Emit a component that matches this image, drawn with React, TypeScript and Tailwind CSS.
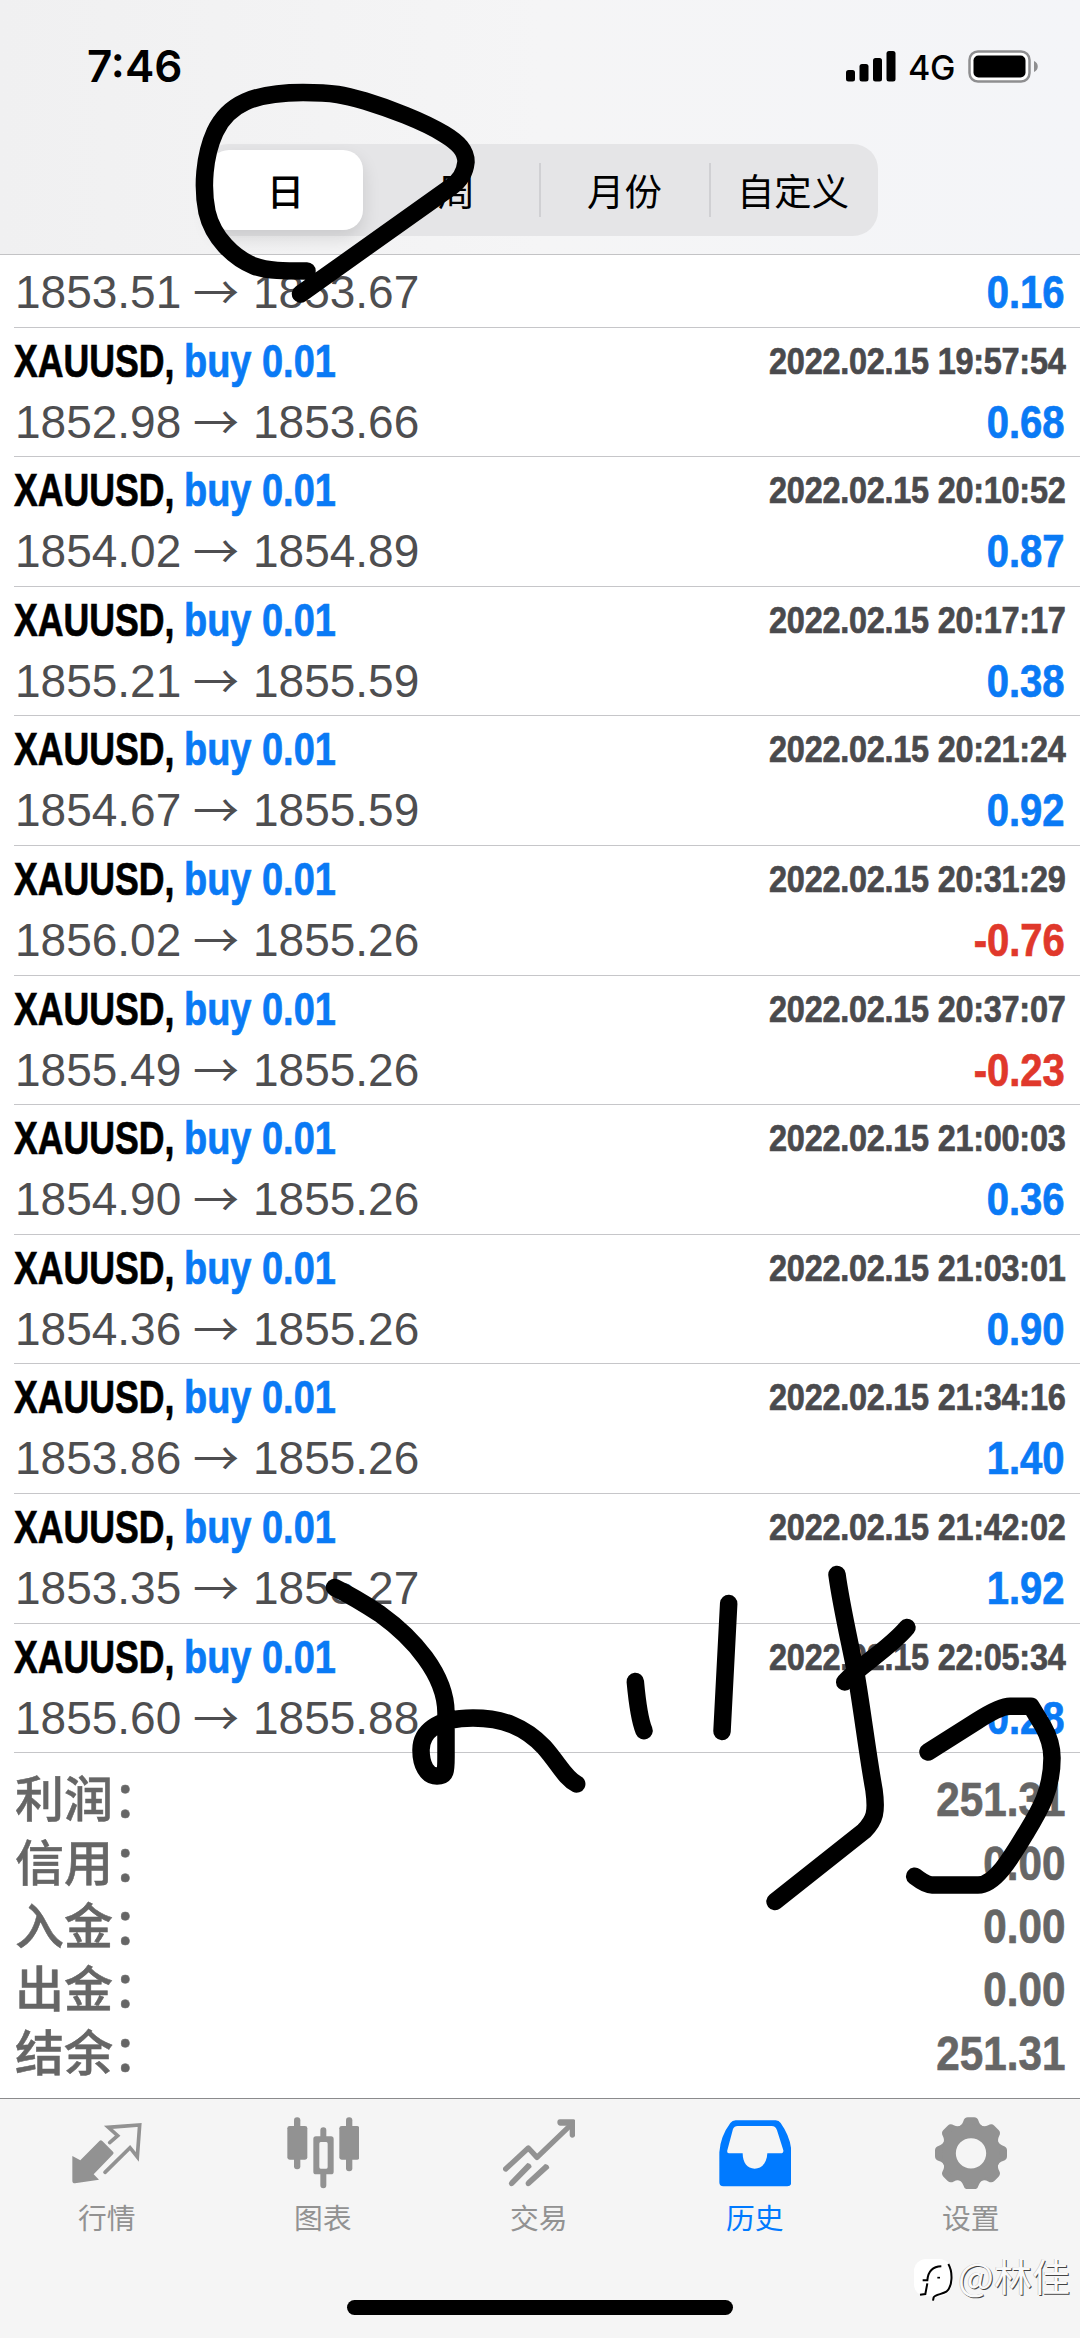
import clsx from "clsx";
import type { ReactNode } from "react";

type Deal = {
  time: string;
  open: string;
  close: string;
  profit: string;
};

const deals: Deal[] = [
  { time: "", open: "1853.51", close: "1853.67", profit: "0.16" },
  { time: "2022.02.15 19:57:54", open: "1852.98", close: "1853.66", profit: "0.68" },
  { time: "2022.02.15 20:10:52", open: "1854.02", close: "1854.89", profit: "0.87" },
  { time: "2022.02.15 20:17:17", open: "1855.21", close: "1855.59", profit: "0.38" },
  { time: "2022.02.15 20:21:24", open: "1854.67", close: "1855.59", profit: "0.92" },
  { time: "2022.02.15 20:31:29", open: "1856.02", close: "1855.26", profit: "-0.76" },
  { time: "2022.02.15 20:37:07", open: "1855.49", close: "1855.26", profit: "-0.23" },
  { time: "2022.02.15 21:00:03", open: "1854.90", close: "1855.26", profit: "0.36" },
  { time: "2022.02.15 21:03:01", open: "1854.36", close: "1855.26", profit: "0.90" },
  { time: "2022.02.15 21:34:16", open: "1853.86", close: "1855.26", profit: "1.40" },
  { time: "2022.02.15 21:42:02", open: "1853.35", close: "1855.27", profit: "1.92" },
  { time: "2022.02.15 22:05:34", open: "1855.60", close: "1855.88", profit: "0.28" }
];

const totals = [
  { label: "利润：", value: "251.31" },
  { label: "信用：", value: "0.00" },
  { label: "入金：", value: "0.00" },
  { label: "出金：", value: "0.00" },
  { label: "结余：", value: "251.31" }
];

const periods = ["日", "周", "月份", "自定义"];

function StatusBar() {
  return (
    <div className="flex h-[144px] items-start justify-between pr-[41px] pl-[87px]">
      <span className="mt-[40px] font-['Inter',sans-serif] text-[44px] leading-[52px] font-semibold text-black">
        7:46
      </span>
      <div className="mt-[50px] flex h-8 items-center">
        <svg width="50" height="32" viewBox="0 0 50 32">
          <rect x="0" y="20" width="9" height="11.5" rx="2.5" />
          <rect x="13.5" y="14" width="9" height="17.5" rx="2.5" />
          <rect x="27" y="8" width="9" height="23.5" rx="2.5" />
          <rect x="40.5" y="1" width="9" height="30.5" rx="2.5" />
        </svg>
        <span className="mt-[4px] ml-[12px] w-[60px] font-['Inter',sans-serif] text-[34px] leading-8 font-medium tracking-[-0.3px]">
          4G
        </span>
        <svg width="71" height="33" viewBox="0 0 71 33">
          <rect x="1.5" y="1.5" width="60" height="30" rx="8.5" fill="#fff" stroke="#8e8e90" strokeWidth="2.5" />
          <rect x="5.5" y="5.5" width="52" height="22" rx="5" />
          <path d="M66 11c5 2 5 9 0 11z" fill="#8e8e90" />
        </svg>
      </div>
    </div>
  );
}

function PeriodTabs() {
  return (
    <div className="mx-auto flex h-[92px] w-[675px] items-center rounded-[25px] bg-[#e5e5e7] p-[6px] font-['Noto_Sans_CJK_SC',sans-serif] text-[37.4px] text-black">
      {periods.map((period, index) => (
        <div
          key={period}
          className={clsx(
            "flex shrink-0 items-center justify-center leading-[54px]",
            index === 0 && "h-20 w-[154px] rounded-[20px] bg-white pb-px font-medium shadow-[0_8px_18px_rgba(0,0,0,0.12)]",
            index === 1 && "h-[54px] w-[176px] pl-3",
            index > 1 && "h-[54px] border-l-2 border-[#d0d0d3]",
            index === 2 && "w-[170px]",
            index === 3 && "w-[163px] pl-1"
          )}
        >
          {period}
        </div>
      ))}
    </div>
  );
}

function DealRow({ deal }: { deal: Deal }) {
  return (
    <div className="ml-[14px] h-[129.6px] border-b border-[#c6c6c9] pt-[3px] pr-[15px]">
      <div className="flex h-[61px] justify-between text-[46px] leading-[60px] font-bold [-webkit-text-stroke:0.7px]">
        <div className="flex whitespace-nowrap">
          <span className="w-[170px] origin-left scale-x-[0.775] text-black">XAUUSD,</span>
          <span className="origin-left scale-x-[0.825] text-[#0a7af5]">buy 0.01</span>
        </div>
        <span className="origin-right scale-x-[0.868] text-[37.4px] tracking-[-0.3px] whitespace-nowrap text-[#4a4a4d]">
          {deal.time}
        </span>
      </div>
      <div className="flex h-[60px] justify-between text-[46px] leading-[60px]">
        <div className="flex text-[#4e4e50]">
          <span className="ml-px w-[178px]">{deal.open}</span>
          <span className="-mt-[3px] w-[60px] font-['Noto_Sans_CJK_SC',sans-serif]">→</span>
          <span>{deal.close}</span>
        </div>
        <span
          className={clsx(
            "origin-right scale-x-[0.87] font-bold [-webkit-text-stroke:0.7px]",
            deal.profit.startsWith("-") ? "text-[#e0382b]" : "text-[#0a7af5]"
          )}
        >
          {deal.profit}
        </span>
      </div>
    </div>
  );
}

function Totals() {
  return (
    <div className="pt-[15px] pr-[15px] pl-[15px] text-[#666]">
      {totals.map((item) => (
        <div key={item.label} className="flex h-[63.4px] items-start justify-between">
          <span className="-mt-[4px] font-['Noto_Sans_CJK_SC',sans-serif] text-[49px] leading-[63px] font-medium [-webkit-text-stroke:0.5px]">
            {item.label}
          </span>
          <span className="origin-right scale-x-[0.87] text-[48.5px] leading-[63px] font-bold [-webkit-text-stroke:0.7px]">
            {item.value}
          </span>
        </div>
      ))}
    </div>
  );
}

// Tab icons share one 216 unit grid, three units to a pixel.
function TabIcon({ viewBox, children }: { viewBox: string; children: ReactNode }) {
  return (
    <svg width="72" height="72" viewBox={viewBox} fill="currentColor">
      {children}
    </svg>
  );
}

const gearTeeth = [0, 45, 90, 135, 180, 225, 270, 315];

const tabs = [
  {
    label: "行情",
    icon: (
      <TabIcon viewBox="212 80 216 216">
        <path d="M216 197l24 13 58-59q4-3 8 1l32 32q4 4 0 8l-58 60 16 16-72 11q-8 0-8-8z" />
        <path
          d="M328 157l24-21-28-25 94-7-7 96-22-28-75 74"
          fill="none"
          stroke="currentColor"
          strokeWidth="11"
          strokeLinecap="round"
        />
      </TabIcon>
    )
  },
  {
    label: "图表",
    icon: (
      <TabIcon viewBox="860 80 216 216">
        <rect x="861" y="107" width="60" height="101" rx="7" />
        <rect x="881" y="81" width="19" height="156" rx="9" />
        <rect x="1017" y="107" width="60" height="101" rx="7" />
        <rect x="1037" y="81" width="19" height="162" rx="9" />
        <path d="M960 120q0-9 9-9t9 9v18h14q8 0 8 8v98q0 8-8 8h-14v33q0 9-9 9t-9-9v-33h-13q-8 0-8-8v-98q0-8 8-8h13zM961 155q-4 0-4 5v70q0 5 4 5h17q4 0 4-5v-70q0-5-4-5z" fillRule="evenodd" />
      </TabIcon>
    )
  },
  {
    label: "交易",
    icon: (
      <TabIcon viewBox="308 80 216 216">
        <path
          d="M316 236l68-63 26 28 100-96"
          fill="none"
          stroke="currentColor"
          strokeWidth="16"
          strokeLinecap="round"
          strokeLinejoin="round"
        />
        <path d="M479 87h40q6 0 6 6v41q-2 8-9 8-8-1-8-9v-27h-29q-8-1-8-10t8-9z" />
        <path d="M381 218q12 2 13 12l-54 55q-8 6-13-1-4-6 2-12zM434 221q12 2 13 12l-57 52q-8 6-13-1-4-6 2-12z" />
      </TabIcon>
    )
  },
  {
    label: "历史",
    icon: (
      <TabIcon viewBox="956 80 216 216">
        <path
          fillRule="evenodd"
          d="M1006 90h120q10 0 15 8 31 44 32 88v90q0 12-12 12h-192q-12 0-12-12v-90q3-48 33-88 6-8 16-8zm6 17q-10 0-14 9l-17 64q-2 9 6 9h40c0 28 14 46 36 46s37-18 38-46h40q9 0 8-9l-19-60q-4-13-16-13z"
        />
      </TabIcon>
    )
  },
  {
    label: "设置",
    icon: (
      <TabIcon viewBox="464 80 216 216">
        {gearTeeth.map((angle) => (
          <path
            key={angle}
            transform={`rotate(${angle} 572 189)`}
            d="M532 110q13-4 17-17 3-12 14-12h18q11 0 14 12 4 13 17 17v28h-80z"
          />
        ))}
        <circle cx="572" cy="189" r="66" fill="none" stroke="currentColor" strokeWidth="41" />
      </TabIcon>
    )
  }
];

function TabBar() {
  return (
    <nav className="h-[240px] border-t border-[#8b8b8d] bg-[#f5f5f5]">
      <div className="-ml-[1.3px] flex h-[201px] pt-[18px] font-['Noto_Sans_CJK_SC',sans-serif]">
        {tabs.map((tab) => (
          <div
            key={tab.label}
            className={clsx("flex w-[216px] shrink-0 flex-col items-center", tab.label === "历史" ? "text-[#007aff]" : "text-[#929292]")}
          >
            {tab.icon}
            <span className="mt-[8px] text-[28.8px] leading-10">{tab.label}</span>
          </div>
        ))}
      </div>
      <div className="mx-auto h-[14.5px] w-[386px] rounded-full bg-black" />
    </nav>
  );
}

// Freehand marker strokes drawn over the list.
function Ink() {
  return (
    <svg
      className="pointer-events-none absolute inset-0"
      width="1080"
      height="2338"
      viewBox="0 0 1080 2338"
      fill="none"
      stroke="#000"
      strokeWidth="17.5"
      strokeLinecap="round"
      strokeLinejoin="round"
    >
      <path d="M307 271C285 271 267 271 254 266C234 258 213 238 207 212C202 188 204 156 215 132C228 104 254 92.500 303 92.500C334 92.500 344 95 365 101C388 108 423 121 444 134C459 143 466 151 466 162C465 172 461 180 451 187L300.500 294" />
      <path d="M334.500 1587.500C350 1595 368 1606 380 1614C412 1637 446 1674 446 1713V1757C446 1771 446 1776 437 1776C427 1776 421 1765 421 1750C421 1733 435 1718 473 1718C503 1718 525 1727 544 1747C559 1764 565 1778 576.700 1784" />
      <path d="M635.300 1681.500C637 1700 640 1721 644 1730.700" />
      <path d="M728.700 1603.500L722 1731.500" />
      <path d="M837 1574.500C841 1604 848 1634 856 1674C862 1708 867 1751 874 1790C877 1812 875 1820 864 1831L775 1901.500" />
      <path d="M907 1627.500C890 1648 862 1664 844.700 1682" />
      <path d="M928 1752L977 1721Q1000 1706.300 1010 1706.300H1031L1043 1726Q1052 1742 1052 1758C1052 1790 1040 1810 1026 1833C1011 1858 995 1885 978 1885H932Q926 1885 914.700 1876.300" />
    </svg>
  );
}

function Watermark() {
  return (
    <div className="absolute top-[2250px] left-[913px] flex items-start">
      <svg width="43" height="56" viewBox="0 0 129 168">
        <rect x="3" y="27" width="112" height="112" rx="36" fill="#fff" />
        <g fill="none" stroke="#000">
          <path d="M29 91h14c2-24 14-41 42-42" strokeWidth="6" />
          <path d="M43 100l-6 32-16 2" strokeWidth="6" />
          <path d="M106 42c14 24 13 68-6 83-12 8-34 8-38 17l-2 10" strokeWidth="6" />
          <path d="M73 83h8" strokeWidth="5" />
        </g>
      </svg>
      <span className="-mt-[3px] ml-[2px] font-['Noto_Sans_CJK_SC',sans-serif] text-[38px] leading-[56px] text-[#fafafa] [text-shadow:1px_1px_0_#444,-0.5px_-0.5px_0_#bbb]">
        @林佳
      </span>
    </div>
  );
}

export default function App() {
  return (
    <div className="relative h-[2338px] w-[1080px] overflow-hidden bg-white font-['Liberation_Sans',sans-serif]">
      <header className="h-[254.5px] border-b-[1.5px] border-[#c3c3c5] bg-linear-to-r from-[#f0f0f1] via-[#f5f5f6] to-[#f4f5f8]">
        <StatusBar />
        <PeriodTabs />
      </header>
      <main className="h-[1843.5px] overflow-hidden">
        <div className="-mt-[56.500px]">
          {deals.map((deal) => (
            <DealRow key={deal.open + deal.time} deal={deal} />
          ))}
        </div>
        <Totals />
      </main>
      <TabBar />
      <Watermark />
      <Ink />
    </div>
  );
}
